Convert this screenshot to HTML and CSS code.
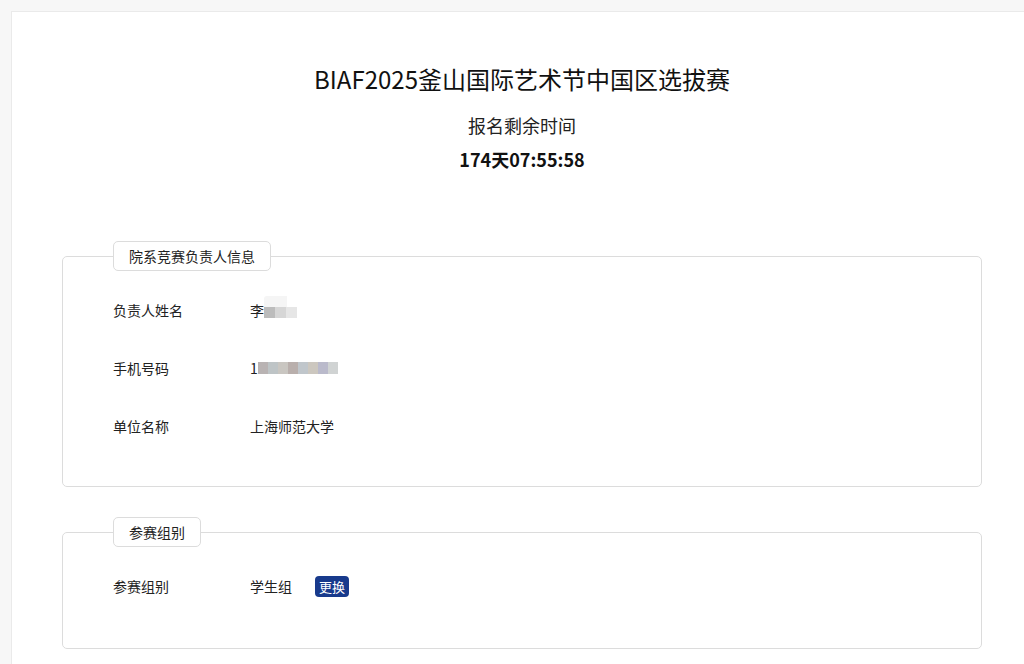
FILE: index.html
```html
<!DOCTYPE html>
<html lang="zh-CN">
<head>
<meta charset="utf-8">
<title>BIAF2025釜山国际艺术节中国区选拔赛</title>
<link rel="stylesheet" href="styles.css">
</head>
<body>
<div class="page">
  <div class="card">
    <h1 class="title">BIAF2025釜山国际艺术节中国区选拔赛</h1>
    <div class="subtitle">报名剩余时间</div>
    <div class="countdown">174天07:55:58</div>

    <fieldset class="group group-first">
      <legend class="legend">院系竞赛负责人信息</legend>
      <div class="row">
        <div class="label">负责人姓名</div>
        <div class="value">李<span class="name-mosaic"><span class="n-row"><span class="blk n0"></span></span><span class="n-row"><span class="blk n1"></span><span class="blk n2"></span><span class="blk n3"></span></span></span></div>
      </div>
      <div class="row">
        <div class="label">手机号码</div>
        <div class="value">1<span class="phone-mosaic"><span class="blk p1"></span><span class="blk p2"></span><span class="blk p3"></span><span class="blk p4"></span><span class="blk p5"></span><span class="blk p6"></span><span class="blk p7"></span><span class="blk p8"></span></span></div>
      </div>
      <div class="row">
        <div class="label">单位名称</div>
        <div class="value">上海师范大学</div>
      </div>
    </fieldset>

    <fieldset class="group group-last">
      <legend class="legend">参赛组别</legend>
      <div class="row">
        <div class="label">参赛组别</div>
        <div class="value">学生组<button class="btn" type="button">更换</button></div>
      </div>
    </fieldset>
  </div>
</div>
</body>
</html>
```

FILE: styles.css
```css
html, body {
  margin: 0;
  padding: 0;
}
body {
  background: #f7f7f7;
  font-family: "Noto Sans CJK SC", "Liberation Sans", sans-serif;
  color: #222;
  overflow: hidden;
  height: 664px;
}
.page {
  padding: 11px 0 0 11px;
}
.card {
  width: 1020px;
  background: #fff;
  border: 1px solid #eaeaea;
  padding-top: 51px;
  padding-bottom: 40px;
}
.title {
  margin: 0;
  font-size: 24px;
  font-weight: normal;
  line-height: 32px;
  text-align: center;
  color: #111;
}
.subtitle {
  margin-top: 18px;
  font-size: 18px;
  line-height: 24px;
  text-align: center;
  color: #222;
}
.countdown {
  margin-top: 10px;
  font-size: 18px;
  line-height: 24px;
  font-weight: bold;
  text-align: center;
  color: #111;
}
.group {
  margin: 30px 50px 0 50px;
  width: 920px;
  box-sizing: border-box;
  border: 1px solid #dcdcdc;
  border-radius: 5px;
  padding: 10px 50px 31px 50px;
  min-width: 0;
}
.group-first {
  margin-top: 70px;
}
.group-last {
  padding-bottom: 33px;
}
.legend {
  box-sizing: border-box;
  height: 30px;
  padding: 0 15px;
  border: 1px solid #dcdcdc;
  border-radius: 5px;
  font-size: 14px;
  line-height: 28px;
  color: #222;
  background: #fff;
}
.row {
  display: flex;
  align-items: center;
  height: 58px;
  font-size: 14px;
  color: #222;
}
.label {
  width: 137px;
  flex-shrink: 0;
}
.value {
  display: flex;
  align-items: center;
}
.name-mosaic {
  display: inline-flex;
  flex-direction: column;
  position: relative;
  top: -3px;
}
.n-row {
  display: flex;
}
.name-mosaic .blk {
  width: 11px;
  height: 11px;
}
.name-mosaic .n0 {
  width: 23px;
  background: #f5f5f5;
  border-radius: 3px 0 0 0;
}
.phone-mosaic {
  display: inline-flex;
}
.phone-mosaic .blk {
  width: 10px;
  height: 12px;
}
.n1 { background: #bcbcbc; }
.n2 { background: #d6d6d6; }
.n3 { background: #e6e6e6; }
.p1 { background: #b9b3b3; }
.p2 { background: #bec4c6; }
.p3 { background: #c9c6c1; }
.p4 { background: #b9afac; }
.p5 { background: #c0c6cb; }
.p6 { background: #ccc7bf; }
.p7 { background: #babacb; }
.p8 { background: #d0d3d3; }
.btn {
  margin-left: 23px;
  width: 34px;
  height: 21px;
  padding: 0;
  border: none;
  border-radius: 4px;
  background: #183a8c;
  color: #fff;
  font-family: "Noto Sans CJK SC", "Liberation Sans", sans-serif;
  font-size: 13px;
  line-height: 21px;
  cursor: pointer;
}
```
